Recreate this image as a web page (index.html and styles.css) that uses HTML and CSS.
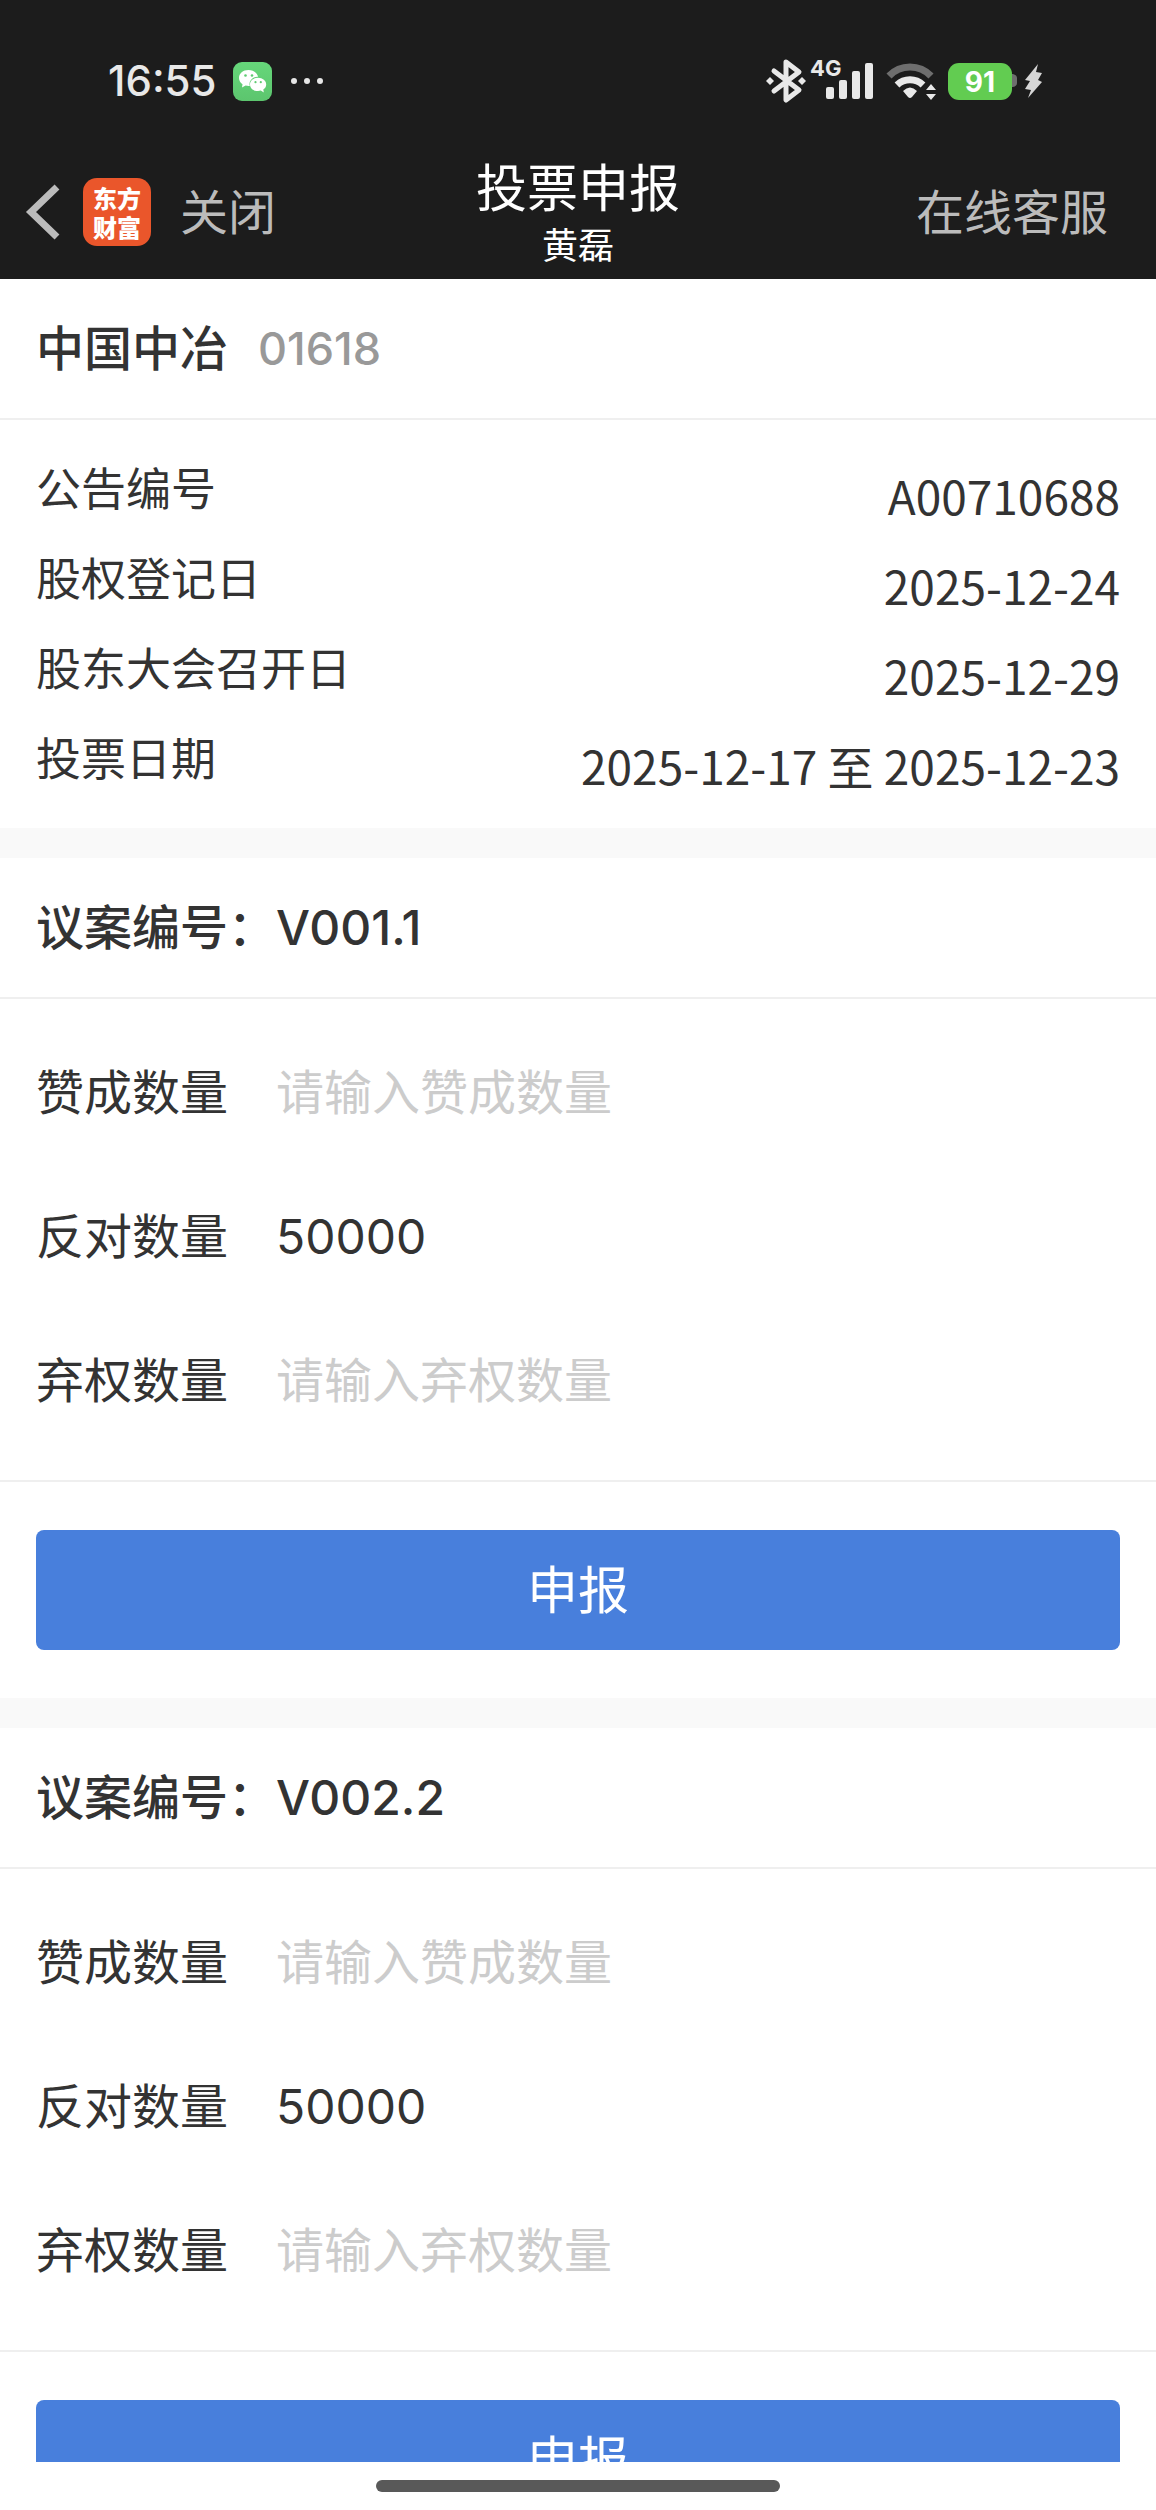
FILE: index.html
```html
<!DOCTYPE html>
<html lang="zh-CN">
<head>
<meta charset="utf-8">
<meta name="viewport" content="width=device-width">
<title>投票申报</title>
<link rel="stylesheet" href="styles.css">
</head>
<body>
<div class="status">
  <div class="status-group">
    <span class="time">16:55</span>
    <svg class="wechat" viewBox="0 0 39 39" aria-hidden="true">
      <defs><linearGradient id="wx" x1="0" y1="0" x2="0" y2="1"><stop offset="0" stop-color="#66d77a"/><stop offset="1" stop-color="#5cc56e"/></linearGradient></defs>
      <rect width="39" height="39" rx="9" fill="url(#wx)"/>
      <path fill="#fff" d="M15.500 8C10 8 6 11.500 6 16c0 2.600 1.300 4.700 3.500 6.200L9 25.500l3.600-2c1.300.400 2.800.500 4.200.400-1.400-5 2.900-9.400 8.300-9C24.300 10.800 20.300 8 15.500 8z"/>
      <path fill="#fff" d="M25 15.700c-4.600 0-8 3-8 6.700s3.400 6.700 8 6.700c1 0 2-.200 2.800-.500l3 1.800-.500-2.900c1.800-1.200 2.900-3 2.900-5.100 0-3.700-3.600-6.700-8.200-6.700z"/>
      <g fill="#5fcb72"><circle cx="12.500" cy="13.500" r="1.300"/><circle cx="19" cy="13.500" r="1.300"/><circle cx="22.500" cy="20.200" r="1.100"/><circle cx="27.800" cy="20.200" r="1.100"/></g>
    </svg>
    <svg class="dots" viewBox="0 0 34 8" aria-hidden="true"><g fill="#e6e6e6"><circle cx="4" cy="4" r="3"/><circle cx="17" cy="4" r="3"/><circle cx="30" cy="4" r="3"/></g></svg>
  </div>
  <div class="status-icons">
    <svg width="44" height="48" viewBox="0 0 44 48" aria-hidden="true">
      <path d="M10 14 35 33 22 43V5l13 10L10 34" fill="none" stroke="#e8e8e8" stroke-width="5" stroke-linejoin="round" stroke-linecap="round"/>
      <path d="m6 20 4 4-4 4-4-4zM38 20l4 4-4 4-4-4z" fill="#e8e8e8"/>
    </svg>
    <svg width="76" height="48" viewBox="0 0 76 48" aria-hidden="true">
      <text class="network" x="2" y="19">4G</text>
      <g fill="#e8e8e8"><rect x="18" y="30" width="8" height="12" rx="2"/><rect x="31" y="23" width="8" height="19" rx="2"/><rect x="44" y="14" width="8" height="28" rx="2"/><rect x="57" y="6" width="8" height="36" rx="2"/></g>
    </svg>
    <svg width="62" height="48" viewBox="0 0 62 48" aria-hidden="true">
      <path d="M5 19a29 29 0 0 1 42 0" fill="none" stroke="#6e6e6e" stroke-width="7"/>
      <path d="M13 28a19 19 0 0 1 26 0" fill="none" stroke="#e8e8e8" stroke-width="7"/>
      <path d="M19 34q7-7 14 0l-5 6q-2 2-4 0zM47 27l5 6H42zM47 43l5-6H42z" fill="#e8e8e8"/>
    </svg>
    <svg width="76" height="48" viewBox="0 0 76 48" aria-hidden="true">
      <path d="M65 17h2q4 1 4 4v5q0 3-4 4h-2z" fill="#6e6e6e"/>
      <rect x="2" y="6" width="64" height="37" rx="11" fill="#62cc51"/>
      <text class="charge" x="34" y="35" text-anchor="middle">91</text>
    </svg>
    <svg width="22" height="48" viewBox="0 0 22 48" aria-hidden="true">
      <path d="M16 7 3 23l5 1-5 8 6 1-3 8 14-16-4-2 4-7-6-1z" fill="#d6d6d6"/>
    </svg>
  </div>
</div>

<header class="nav">
  <div class="nav-left">
    <button class="back" type="button" aria-label="返回">
      <svg width="36" height="56" viewBox="0 0 36 56"><path d="M32 3 6 28l26 25" fill="none" stroke="#bbb" stroke-width="7"/></svg>
    </button>
    <span class="app"><span>东方</span><span>财富</span></span>
    <a class="nav-link" href="#close">关闭</a>
  </div>
  <div class="nav-title">
    <h1>投票申报</h1>
    <p>黄磊</p>
  </div>
  <a class="nav-link nav-service" href="#service">在线客服</a>
</header>

<main class="content">
  <section class="panel">
    <h2 class="panel-head">中国中冶<span class="code">01618</span></h2>
    <dl class="details">
      <div class="detail"><dt>公告编号</dt><dd>A00710688</dd></div>
      <div class="detail"><dt>股权登记日</dt><dd>2025-12-24</dd></div>
      <div class="detail"><dt>股东大会召开日</dt><dd>2025-12-29</dd></div>
      <div class="detail"><dt>投票日期</dt><dd>2025-12-17 至 2025-12-23</dd></div>
    </dl>
  </section>

  <form class="panel">
    <h2 class="panel-head">议案编号：<span class="number">V001.1</span></h2>
    <div class="fields">
      <div class="field"><label for="yes1">赞成数量</label><input id="yes1" type="text" inputmode="numeric" placeholder="请输入赞成数量"></div>
      <div class="field"><label for="no1">反对数量</label><input id="no1" type="text" inputmode="numeric" value="50000"></div>
      <div class="field"><label for="abs1">弃权数量</label><input id="abs1" type="text" inputmode="numeric" placeholder="请输入弃权数量"></div>
    </div>
    <div class="actions"><button class="submit" type="button">申报</button></div>
  </form>

  <form class="panel">
    <h2 class="panel-head">议案编号：<span class="number">V002.2</span></h2>
    <div class="fields">
      <div class="field"><label for="yes2">赞成数量</label><input id="yes2" type="text" inputmode="numeric" placeholder="请输入赞成数量"></div>
      <div class="field"><label for="no2">反对数量</label><input id="no2" type="text" inputmode="numeric" value="50000"></div>
      <div class="field"><label for="abs2">弃权数量</label><input id="abs2" type="text" inputmode="numeric" placeholder="请输入弃权数量"></div>
    </div>
    <div class="actions"><button class="submit" type="button">申报</button></div>
  </form>
</main>

<footer class="home"><span class="home-bar"></span></footer>
</body>
</html>
```
FILE: styles.css
```css
* {
  box-sizing: border-box;
}

body {
  display: flex;
  flex-direction: column;
  height: 100vh;
  margin: 0;
  background: #fff;
  color: #333;
  font-family: "Noto Sans CJK SC", sans-serif;
  font-size: 48px;
}

h1, h2, p, dl, dd {
  margin: 0;
}

button, input {
  border: 0;
  padding: 0;
  background: none;
  color: inherit;
  font: inherit;
}

a {
  text-decoration: none;
}

svg {
  display: block;
  overflow: visible;
}

/* Phone status bar */
.status {
  display: flex;
  flex: none;
  justify-content: space-between;
  align-items: center;
  height: 144px;
  padding: 18px 112px 0 108px;
  background: #1c1c1c;
  color: #e8e8e8;
}

.status-group,
.status-icons {
  display: flex;
  align-items: center;
}

.time {
  font: 500 42px/48px Inter, sans-serif;
}

.wechat {
  width: 39px;
  height: 39px;
  margin: 0 18px 0 16px;
}

.dots {
  width: 34px;
  height: 8px;
}

.network {
  fill: #e8e8e8;
  font: 700 22px Inter, sans-serif;
}

.charge {
  fill: #fff;
  font: 700 28px Inter, sans-serif;
}

/* Navigation bar */
.nav {
  display: grid;
  flex: none;
  grid-template-columns: 1fr auto 1fr;
  align-items: center;
  height: 135px;
  padding: 0 25px;
  background: #1c1c1c;
}

.nav-left {
  display: flex;
  align-items: center;
}

.app {
  display: flex;
  flex-direction: column;
  justify-content: center;
  align-items: center;
  width: 68px;
  height: 68px;
  margin: 0 29px 0 22px;
  border-radius: 14px;
  background: #ea562b;
  color: #fff;
  font-size: 24px;
  font-weight: 900;
  line-height: 29px;
}

.nav-link {
  padding-bottom: 6px;
  color: #bbb;
  line-height: 64px;
}

.nav-service {
  padding-right: 23px;
  text-align: right;
}

.nav-title {
  padding-bottom: 2px;
  color: #fff;
  text-align: center;
}

.nav-title h1 {
  font-size: 51px;
  font-weight: 400;
  line-height: 64px;
}

.nav-title p {
  font-size: 36px;
  line-height: 52px;
}

/* Scrolling page */
.content {
  display: flex;
  flex: 1;
  flex-direction: column;
  gap: 30px;
  min-height: 0;
  overflow-y: auto;
  scrollbar-width: none;
  background: #f9f9f9;
}

.panel {
  flex: none;
  background: #fff;
}

.panel-head {
  display: flex;
  align-items: center;
  height: 141px;
  padding: 0 36px 6px;
  border-bottom: 2px solid #efefef;
  font-size: 48px;
  font-weight: 500;
  line-height: 69px;
}

.code,
.number {
  padding-top: 6px;
  font-family: Inter, sans-serif;
}

.code {
  margin-left: 30px;
  color: #999;
  font-size: 45px;
}

.details {
  padding: 22px 36px 26px;
}

.detail {
  display: flex;
  justify-content: space-between;
  font-size: 45px;
  line-height: 90px;
}

.detail dd {
  height: 90px;
  padding-top: 8px;
  font-size: 46px;
}

.fields {
  padding: 21px 36px 28px;
  border-bottom: 2px solid #efefef;
}

.field {
  display: flex;
  align-items: center;
  gap: 48px;
  height: 144px;
}

.field label {
  padding-bottom: 6px;
}

.field input {
  flex: 1;
  min-width: 0;
  height: 96px;
  outline: 0;
  font-family: Inter, "Noto Sans CJK SC", sans-serif;
}

.field input::placeholder {
  color: #ccc;
  font-family: "Noto Sans CJK SC", sans-serif;
  opacity: 1;
}

.actions {
  padding: 48px 36px;
}

.submit {
  display: block;
  width: 100%;
  height: 120px;
  padding-bottom: 6px;
  border-radius: 8px;
  background: #487fdc;
  color: #fff;
  font-size: 51px;
}

.home {
  display: flex;
  flex: none;
  justify-content: center;
  align-items: center;
  height: 48px;
}

.home-bar {
  width: 35%;
  height: 12px;
  border-radius: 6px;
  background: #595959;
}
```
